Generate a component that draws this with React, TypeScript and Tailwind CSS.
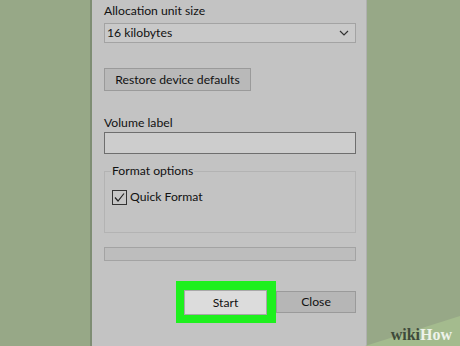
import { Component } from 'react'

const FONT = { fontFamily: 'Lato, "Noto Sans", sans-serif' }

export default class App extends Component {
    render() {
        return (
            <div className="relative h-[346px] w-[460px] overflow-hidden bg-[#97a887]" style={FONT}>
                {/* dialog panel */}
                <div className="absolute left-[90px] top-0 h-[346px] w-[2px] bg-[#7e8d73]" />
                <div className="ml-[92px] flex h-[346px] w-[275px] flex-col border-r border-[#b0b0b0] bg-[#c3c3c3] pl-[12px] text-[12.2px] leading-4 text-[#111]">
                    <span className="mt-[3px] h-4">Allocation unit size</span>
                    <div className="mt-[4px] flex h-[20px] w-[252px] items-center justify-between border border-[#a3a3a3] bg-[#c9c9c9] pl-[2px] pr-[6px]">
                        <span>16 kilobytes</span>
                        <svg width="10" height="6" viewBox="0 0 10 6" fill="none">
                            <path d="M1 1 L5 5 L9 1" stroke="#333" strokeWidth="1.2" />
                        </svg>
                    </div>
                    <button className="mt-[25px] flex h-[23px] w-[147px] items-center justify-center border border-[#9a9a9a] bg-[#b9b9b9]">
                        Restore device defaults
                    </button>
                    <span className="mt-[24px] h-4">Volume label</span>
                    <div className="mt-[1px] h-[22px] w-[252px] border border-[#6e6e6e] bg-[#cdcdcd]" />
                    <div className="relative mt-[17px] h-[62px] w-[252px] border border-[#b3b3b3]">
                        <span className="absolute left-[6px] top-[-9px] bg-[#c3c3c3] px-px">Format options</span>
                        <div className="ml-[7px] mt-[17px] flex items-center gap-[3px]">
                            <div className="flex h-[15px] w-[15px] items-center justify-center border border-[#333] bg-[#c6c6c6]">
                                <svg width="13" height="13" viewBox="0 0 13 13" fill="none">
                                    <path d="M2 6.5 L5 10 L11 2.5" stroke="#222" strokeWidth="1.2" />
                                </svg>
                            </div>
                            <span>Quick Format</span>
                        </div>
                    </div>
                    <div className="mt-[14px] h-[14px] w-[252px] border border-[#a3a3a3] bg-[#bdbdbd]" />
                    <div className="mt-[20px] flex items-center">
                        <div className="ml-[72px] bg-[#1ef01e] pb-[8px] pl-[8px] pr-[9px] pt-[9px]">
                            <button className="flex h-[25px] w-[83px] items-center justify-center border border-[#a8a8a8] bg-[#dcdcdc]">
                                Start
                            </button>
                        </div>
                        <button className="flex h-[22px] w-[80px] items-center justify-center border border-[#9a9a9a] bg-[#b6b6b6]">
                            Close
                        </button>
                    </div>
                </div>
                {/* watermark */}
                <svg className="absolute bottom-0 right-0" width="95" height="30" viewBox="0 0 95 30">
                    <polygon points="0,30 95,0 95,30" fill="#a4bb8e" />
                </svg>
                <div className="absolute bottom-[3px] right-[8px] font-['Liberation_Serif',serif] text-[16px] font-bold leading-none">
                    <span className="text-[#3e4a3a]">wiki</span>
                    <span className="text-[#eef3ea]">How</span>
                </div>
            </div>
        )
    }
}
